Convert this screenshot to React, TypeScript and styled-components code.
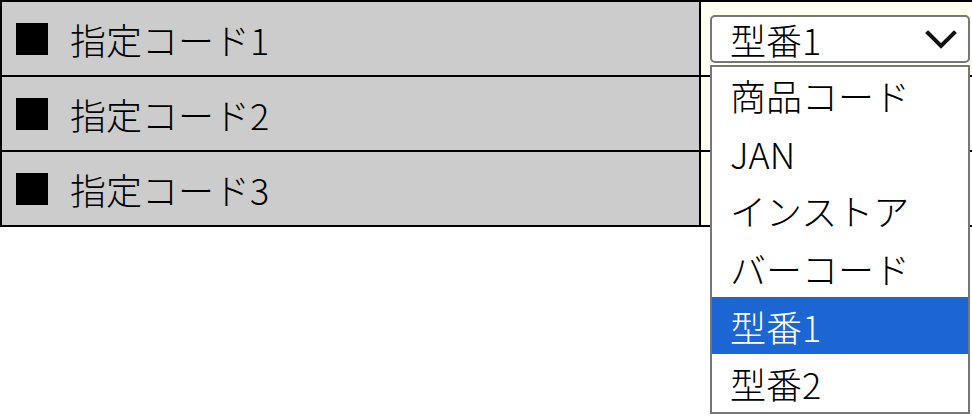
import styled, { createGlobalStyle } from 'styled-components'

const GlobalStyle = createGlobalStyle`
  html, body {
    margin: 0;
    padding: 0;
    background: #ffffff;
  }
  body {
    font-family: "Noto Sans CJK JP", "Noto Sans", sans-serif;
    font-weight: 300;
    color: #000000;
  }
`

const Page = styled.div`
  width: 100vw;
  height: 100vh;
  overflow: hidden;
`

const Grid = styled.div`
  display: grid;
  grid-template-columns: 699px 1fr;
  width: 1000px;
  border-top: 2px solid #000;
  border-left: 2px solid #000;
`

const LabelCell = styled.div`
  box-sizing: border-box;
  height: 75px;
  display: flex;
  align-items: center;
  gap: 22px;
  padding-left: 14px;
  background: #cccccc;
  border-right: 2px solid #000;
  border-bottom: 2px solid #000;
  font-size: 36px;
  line-height: 1;
`

const Mark = styled.span`
  display: inline-block;
  width: 32px;
  height: 32px;
  background: #000;
`

const ValueCell = styled.div`
  box-sizing: border-box;
  height: 75px;
  display: flex;
  align-items: center;
  padding-left: 9px;
  background: #fffff0;
  border-right: 2px solid #000;
  border-bottom: 2px solid #000;
`

const SelectWrap = styled.div`
  position: relative;
  width: 260px;
`

const SelectBox = styled.div`
  box-sizing: border-box;
  height: 48px;
  display: flex;
  align-items: center;
  justify-content: space-between;
  padding: 0 11px 0 18px;
  background: #ffffff;
  border: 2px solid #767676;
  border-radius: 5px;
  font-size: 36px;
  line-height: 1;
`

const ListBox = styled.ul`
  position: absolute;
  top: calc(100% + 2px);
  left: 0;
  box-sizing: border-box;
  width: 260px;
  margin: 0;
  padding: 0;
  list-style: none;
  background: #ffffff;
  border: 2px solid #767676;
  z-index: 2;
`

const Option = styled.li<{ $selected?: boolean }>`
  height: 57.6px;
  display: flex;
  align-items: center;
  padding-left: 18px;
  font-size: 36px;
  line-height: 1;
  background: ${({ $selected }) => ($selected ? '#1b66d3' : 'transparent')};
  color: ${({ $selected }) => ($selected ? '#ffffff' : '#000000')};
`

const Chevron = () => (
  <svg width="32" height="22" viewBox="0 0 32 22" aria-hidden="true">
    <polyline
      points="3,5 16,18 29,5"
      fill="none"
      stroke="#111"
      strokeWidth="4"
      strokeLinecap="square"
    />
  </svg>
)

const rows = ['指定コード1', '指定コード2', '指定コード3']
const options = ['商品コード', 'JAN', 'インストア', 'バーコード', '型番1', '型番2']
const current = '型番1'

export default function App() {
  return (
    <Page>
      <GlobalStyle />
      <Grid>
        {rows.map((label, i) => [
          <LabelCell key={`l${i}`}>
            <Mark />
            <span>{label}</span>
          </LabelCell>,
          <ValueCell key={`v${i}`}>
            {i === 0 && (
              <SelectWrap>
                <SelectBox>
                  <span>{current}</span>
                  <Chevron />
                </SelectBox>
                <ListBox role="listbox">
                  {options.map((o) => (
                    <Option key={o} $selected={o === current}>
                      {o}
                    </Option>
                  ))}
                </ListBox>
              </SelectWrap>
            )}
          </ValueCell>,
        ])}
      </Grid>
    </Page>
  )
}
